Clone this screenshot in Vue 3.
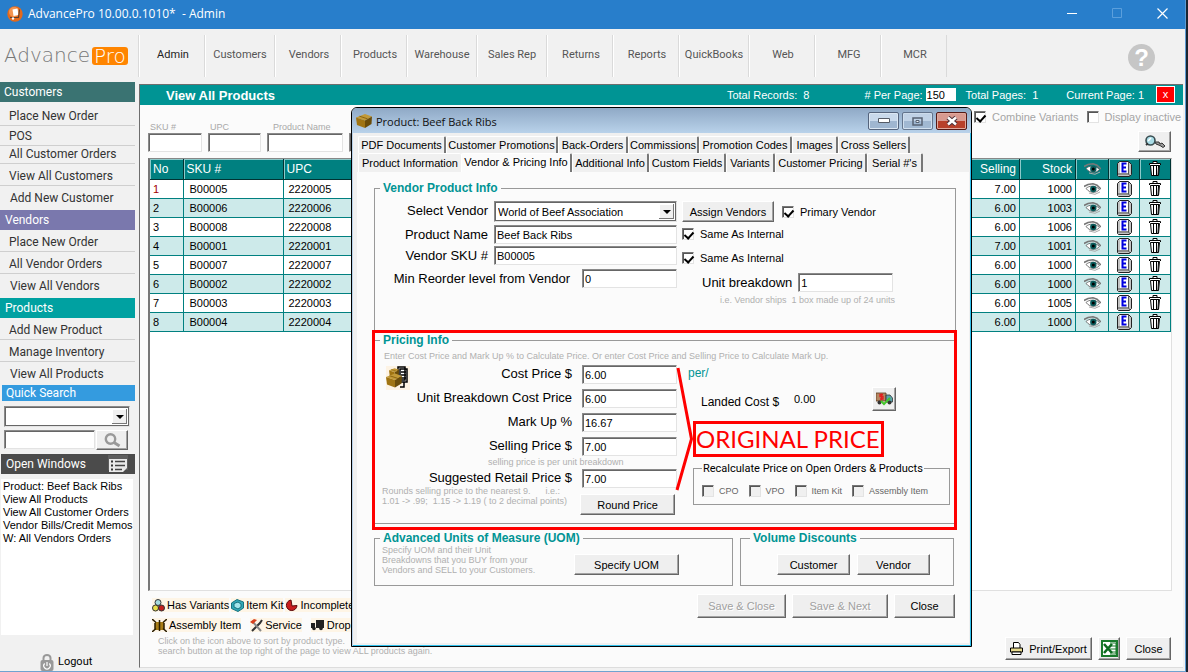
<script setup>
import { ref } from 'vue'

const navItems = ['Admin', 'Customers', 'Vendors', 'Products', 'Warehouse', 'Sales Rep', 'Returns', 'Reports', 'QuickBooks', 'Web', 'MFG', 'MCR']

const menus = [
  { title: 'Customers', kind: 'customers', items: ['Place New Order', 'POS', 'All Customer Orders', 'View All Customers', 'Add New Customer'] },
  { title: 'Vendors', kind: 'vendors', items: ['Place New Order', 'All Vendor Orders', 'View All Vendors'] },
  { title: 'Products', kind: 'products', items: ['Add New Product', 'Manage Inventory', 'View All Products'] },
]

const openWindows = ['Product: Beef Back Ribs', 'View All Products', 'View All Customer Orders', 'Vendor Bills/Credit Memos', 'W: All Vendors Orders']

const products = [
  { sku: 'B00005', upc: '2220005', selling: '7.00', stock: 1000 },
  { sku: 'B00006', upc: '2220006', selling: '6.00', stock: 1003 },
  { sku: 'B00008', upc: '2220008', selling: '6.00', stock: 1006 },
  { sku: 'B00001', upc: '2220001', selling: '7.00', stock: 1001 },
  { sku: 'B00007', upc: '2220007', selling: '6.00', stock: 1000 },
  { sku: 'B00002', upc: '2220002', selling: '6.00', stock: 1000 },
  { sku: 'B00003', upc: '2220003', selling: '6.00', stock: 1005 },
  { sku: 'B00004', upc: '2220004', selling: '6.00', stock: 1000 },
]

const tabsBack = ['PDF Documents', 'Customer Promotions', 'Back-Orders', 'Commissions', 'Promotion Codes', 'Images', 'Cross Sellers']
const tabsFront = ['Product Information', 'Vendor & Pricing Info', 'Additional Info', 'Custom Fields', 'Variants', 'Customer Pricing', "Serial #'s"]
const activeTab = ref('Vendor & Pricing Info')

const recalcTargets = ['CPO', 'VPO', 'Item Kit', 'Assembly Item']

const perPage = ref('150')
const productName = ref('Beef Back Ribs')
const vendorSku = ref('B00005')
const reorder = ref('0')
const breakdown = ref('1')
const cost = ref('6.00')
const unitCost = ref('6.00')
const markUp = ref('16.67')
const selling = ref('7.00')
const retail = ref('7.00')
</script>

<template>
  <div class="app">
    <svg class="sprite" aria-hidden="true">
      <symbol id="i-eye" viewBox="0 0 17 12">
        <path d="M0 3.500 4 1.500 9 .8 13 2.200 17 6" fill="none" stroke="#777" stroke-width="1.600" />
        <path d="M2 5.500C5 2.500 11 2 15.500 6.500 12 10.500 6 10.500 2 5.500Z" fill="#fff" stroke="#555" stroke-width=".8" />
        <circle cx="9.300" cy="6" r="3.200" fill="#0a5c5c" />
        <circle cx="9.300" cy="6" r="1.500" fill="#000" />
        <path d="M5 10 11 11.300 16 9" fill="none" stroke="#aaa" stroke-width="1" />
      </symbol>
      <symbol id="i-e" viewBox="0 0 15 16">
        <path d="M2.500.5h9l3 3v10l-2 2H1.500l-1-1v-12Z" fill="#c4c4c4" stroke="#222" />
        <path d="M11.500 1v12l1.500 2M1 13h10.500" fill="none" stroke="#555" />
        <rect x="3" y="1" width="8" height="11" fill="#fff" />
        <path d="M9.500 2.500H5.500v8h4M5.500 6.500h3.500" fill="none" stroke="#0000e0" stroke-width="2" />
      </symbol>
      <symbol id="i-trash" viewBox="0 0 12 15">
        <path d="M1.500 4.500h9l-1 10h-7Z" fill="#fff" stroke="#000" />
        <path d="M.5 4v-1.500h11V4M4 2V.5h4V2" fill="#fff" stroke="#000" />
        <path d="M4.500 5v9M7.500 5v9M9.500 5l-.5 9" stroke="#000" fill="none" />
      </symbol>
      <symbol id="i-box" viewBox="0 0 16 14">
        <path d="M0 3.500 9 0l7 2.500-7 4Z" fill="#c29a38" />
        <path d="m0 3.500 9 3V14L1 11Z" fill="#a07412" />
        <path d="m9 6.500 7-4-.5 7.500L9 14Z" fill="#6b4c08" />
        <path d="m3.500 2.200 8 2.600" stroke="#8c6512" />
      </symbol>
    </svg>

    <header class="titlebar">
      <svg class="app-icon" viewBox="0 0 16 16" aria-hidden="true">
        <circle cx="8" cy="8" r="7.700" fill="#e4691b" />
        <circle cx="7" cy="6" r="5" fill="#f39450" />
        <path d="m5.500 3.500 5-1 1 6.500-5 1Z" fill="#fff" />
        <path d="M3 11.500h8.500l1-8" fill="none" stroke="#5a4030" stroke-width="1.200" />
        <circle cx="6" cy="12.500" r="1.200" fill="#fff" />
      </svg>
      <h1>AdvancePro 10.00.0.1010*&nbsp; - Admin</h1>
      <div class="caption-buttons">
        <button type="button" aria-label="Minimize"><svg viewBox="0 0 11 11"><path d="M0 5.500h10" stroke="#fff" /></svg></button>
        <button type="button" aria-label="Maximize" disabled><svg viewBox="0 0 11 11"><path d="M.5.5h9v9h-9Z" fill="none" stroke="#5b9fdc" /></svg></button>
        <button type="button" aria-label="Close window"><svg viewBox="0 0 11 11"><path d="m.5.5 10 10m0-10-10 10" stroke="#fff" stroke-width="1.200" /></svg></button>
      </div>
    </header>

    <div class="topbar">
      <div class="logo">Advance<span>Pro</span></div>
      <nav class="nav">
        <a v-for="n in navItems" :key="n" href="#" :class="{ here: n === 'Admin', wide: ['Customers', 'Warehouse', 'Sales Rep', 'QuickBooks'].includes(n) }">{{ n }}</a>
      </nav>
      <button type="button" class="help" aria-label="Help">?</button>
    </div>

    <div class="body">
      <aside class="sidebar">
        <section v-for="m in menus" :key="m.title" class="menu" :class="m.kind">
          <h2>{{ m.title }}</h2>
          <a v-for="i in m.items" :key="i" href="#">{{ i }}</a>
        </section>

        <form class="quick" @submit.prevent>
          <h2>Quick Search</h2>
          <div class="select quick-select"><select aria-label="Search category"><option></option></select></div>
          <div class="quick-line">
            <input class="box" type="text" aria-label="Search text" />
            <button class="btn" type="submit" aria-label="Search">
              <svg width="17" height="15" viewBox="0 0 17 15"><circle cx="6.500" cy="6" r="4.700" fill="none" stroke="#999" stroke-width="2.400" /><path d="m10 9.500 5.500 3.500" stroke="#999" stroke-width="3" /></svg>
            </button>
          </div>
        </form>

        <section class="windows">
          <h2>Open Windows
            <svg width="20" height="18" viewBox="0 0 20 18" aria-hidden="true"><path d="M0 0h20v15H0Z" fill="#5e5e5e" /><path d="M1 4h18v9l-4 4H1Z" fill="#e9e9e9" /><path d="M3 6.500h2m-2 4h2m-2 4h2" stroke="#333" stroke-width="2" /><path d="M7 6.500h10m-10 4h10m-10 4h7" stroke="#444" stroke-width="1.500" /></svg>
          </h2>
          <ul><li v-for="w in openWindows" :key="w">{{ w }}</li></ul>
        </section>

        <button type="button" class="logout">
          <svg width="14" height="17" viewBox="0 0 14 17" aria-hidden="true"><path d="M3.500 8V4a3.500 3 0 0 1 7 0v4" fill="none" stroke="#999" stroke-width="2" /><rect x=".5" y="6" width="13" height="11" rx="2" fill="#999" /><path d="M4.700 9.500a3.200 3.200 0 1 0 4.600 0M7 8v4" fill="none" stroke="#fff" stroke-width="1.200" /></svg>
          Logout
        </button>
      </aside>

      <main class="main">
        <div class="bar">
          <h2>View All Products</h2>
          <span class="records">Total Records:&nbsp; 8</span>
          <label class="per">#&nbsp;Per Page: <input v-model="perPage" type="text" /></label>
          <span class="pages">Total Pages:&nbsp; 1</span>
          <span class="page-no">Current Page: 1</span>
          <button type="button" class="close-x" aria-label="Close list">x</button>
        </div>

        <div class="filters">
          <label class="f-sku">SKU #<input class="box" type="text" /></label>
          <label class="f-upc">UPC<input class="box" type="text" /></label>
          <label class="f-name">Product Name<input class="box" type="text" /></label>
          <label class="f-more"><input class="box" type="text" aria-label="Filter" /></label>
          <div class="options">
            <div class="ticks">
              <label><input type="checkbox" checked /> Combine Variants</label>
              <label><input type="checkbox" /> Display inactive</label>
            </div>
            <button type="button" class="btn find" aria-label="Find">
              <svg width="22" height="14" viewBox="0 0 22 14"><path d="M11 7h4l1 2 2-1 3 3-2 1.500-3-2-4-1.500Z" fill="#999" stroke="#333" /><circle cx="6.500" cy="5.500" r="4.500" fill="#a9dce6" stroke="#3a4c50" stroke-width="1.600" /><path d="m4 6 3-3" stroke="#fff" stroke-width="1.500" /><path d="m2 10 2-1.500" stroke="#333" stroke-width="2" /></svg>
            </button>
          </div>
        </div>

        <div class="grid-box">
          <table>
            <colgroup><col class="c-no" /><col class="c-sku" /><col class="c-upc" /><col /><col class="c-sell" /><col class="c-stock" /><col class="c-eye" /><col class="c-e" /><col class="c-bin" /></colgroup>
            <thead>
              <tr>
                <th>No</th><th>SKU #</th><th>UPC</th><th></th><th class="num">Selling</th><th class="num">Stock</th>
                <th class="ic"><svg width="17" height="12"><use href="#i-eye" /></svg></th>
                <th class="ic"><svg width="15" height="16"><use href="#i-e" /></svg></th>
                <th class="ic"><svg width="12" height="15"><use href="#i-trash" /></svg></th>
              </tr>
            </thead>
            <tbody>
              <tr v-for="(p, i) in products" :key="p.sku">
                <td :class="{ first: i === 0 }">{{ i + 1 }}</td><td class="code">{{ p.sku }}</td><td>{{ p.upc }}</td><td></td>
                <td class="num">{{ p.selling }}</td><td class="num">{{ p.stock }}</td>
                <td class="ic"><svg width="17" height="12"><use href="#i-eye" /></svg></td>
                <td class="ic"><svg width="15" height="16"><use href="#i-e" /></svg></td>
                <td class="ic"><svg width="12" height="15"><use href="#i-trash" /></svg></td>
              </tr>
            </tbody>
          </table>
        </div>

        <footer class="foot">
          <div class="legend">
            <div class="legend-row">
              <span><svg width="13" height="13" viewBox="0 0 13 13"><circle cx="6" cy="3.500" r="3" fill="#a6dce0" stroke="#333" /><circle cx="3.500" cy="9" r="3" fill="#e8e04a" stroke="#333" /><circle cx="9.500" cy="9" r="3" fill="#c22020" stroke="#333" /></svg>Has Variants</span>
              <span><svg width="13" height="13" viewBox="0 0 13 13"><path d="M.5 4 6 .5 12.500 3v6L7 12.500.5 9.500Z" fill="#32a9b8" stroke="#17717e" /><path d="M3 4.500 7 3l3 2v3L7 10 3 8Z" fill="#a4e5ec" stroke="#17717e" /></svg>Item Kit</span>
              <span><svg width="13" height="13" viewBox="0 0 13 13"><path d="M6 1a5.300 5.300 0 1 0 6 5.500L7 7Z" fill="#c81d1d" stroke="#5c0909" /></svg>Incomplete</span>
            </div>
            <div class="legend-row second">
              <span><svg width="15" height="13" viewBox="0 0 15 13"><path d="M3 3h9v8H3Z" fill="#a77c16" /><path d="M0 0l4 3.500M15 0l-4 3.500M0 13l4-3.500M15 13l-4-3.500M7.500 1v11M3 4v6M12 4v6" stroke="#2a1d00" stroke-width="1.500" /></svg>Assembly Item</span>
              <span><svg width="13" height="13" viewBox="0 0 13 13"><path d="m2 12 8-8 2-3" stroke="#333" stroke-width="2" fill="none" /><path d="m2 2 9 10" stroke="#888" stroke-width="2" /><path d="M0 3 4 0l3 1-4 4Z" fill="#d8401c" /></svg>Service</span>
              <span><svg width="14" height="12" viewBox="0 0 14 12"><path d="M5 1h8v8H5ZM0 4h4v5H0Z" fill="#222" /><circle cx="3" cy="9.500" r="1.800" fill="#222" /><circle cx="10" cy="9.500" r="1.800" fill="#222" /></svg>Drop Ship</span>
            </div>
            <p>Click on the icon above to sort by product type.<br />search button at the top right of the page to view ALL products again.</p>
          </div>
          <div class="foot-actions">
            <button type="button" class="btn print"><svg width="13" height="13" viewBox="0 0 13 13" aria-hidden="true"><path d="M3.500 6V.5h5l1.500 2V6" fill="#fff" stroke="#000" /><path d="M.5 6h12v4H.5Z" fill="#e6d98c" stroke="#000" /><path d="M2 10h9v2.500H2Z" fill="#fff" stroke="#000" /></svg>Print/Export</button>
            <button type="button" class="btn excel" aria-label="Export to Excel"><svg width="17" height="17" viewBox="0 0 17 17"><path d="M1 1h15v15H1Z" fill="#fff" stroke="#1a7a2c" stroke-width="2" /><path d="M9 3h6v11H9M9 6h6M9 9h6M9 12h6" stroke="#1a7a2c" fill="none" /><path d="m3 4 8 9m0-9-8 9" stroke="#0d6b20" stroke-width="2.600" /></svg></button>
            <button type="button" class="btn">Close</button>
          </div>
        </footer>
      </main>
    </div>

    <div class="dialog" role="dialog" aria-label="Product: Beef Back Ribs">
      <div class="dlg-title">
        <svg width="16" height="14" aria-hidden="true"><use href="#i-box" /></svg>
        <h2>Product: Beef Back Ribs</h2>
        <button type="button" aria-label="Minimize product"><svg width="12" height="6" viewBox="0 0 12 6"><path d="M.5.5h11v4H.5Z" fill="#fff" stroke="#555b66" /></svg></button>
        <button type="button" class="dim" aria-label="Maximize product"><svg width="11" height="9" viewBox="0 0 11 9"><path d="M1 1h9v7H1Z" fill="none" stroke="#444b59" stroke-width="1.500" /><path d="M4 3.500h3v2H4Z" fill="#fff" stroke="#444b59" /></svg></button>
        <button type="button" class="red" aria-label="Close product"><svg width="12" height="10" viewBox="0 0 12 10"><path d="m2 1.500 8 7m0-7-8 7" stroke="#4b3038" stroke-width="4.500" /><path d="m2 1.500 8 7m0-7-8 7" stroke="#fff" stroke-width="2.500" /></svg></button>
      </div>

      <div class="tabs" role="tablist">
        <div class="tab-row back">
          <button v-for="t in tabsBack" :key="t" type="button" role="tab" :aria-selected="t === activeTab">{{ t }}</button>
        </div>
        <div class="tab-row front">
          <button v-for="t in tabsFront" :key="t" type="button" role="tab" :class="{ active: t === activeTab }" :aria-selected="t === activeTab" @click="activeTab = t">{{ t }}</button>
        </div>
      </div>

      <div class="panel">
        <fieldset class="group vendor-info">
          <legend>Vendor Product Info</legend>
          <div class="cols">
            <div class="v-left">
              <div class="line l1"><label for="vendor">Select Vendor</label><div class="select"><select id="vendor"><option>World of Beef Association</option></select></div></div>
              <div class="line l2"><label for="pname">Product Name</label><input id="pname" v-model="productName" class="box" type="text" /></div>
              <div class="line l3"><label for="vsku">Vendor SKU #</label><input id="vsku" v-model="vendorSku" class="box" type="text" /></div>
              <div class="line l4"><label for="reorder">Min Reorder level from Vendor</label><input id="reorder" v-model="reorder" class="box" type="text" /></div>
            </div>
            <div class="v-right">
              <div class="line"><button type="button" class="btn assign">Assign Vendors</button><label class="tick"><input type="checkbox" checked />Primary Vendor</label></div>
              <label class="tick same"><input type="checkbox" checked />Same As Internal</label>
              <label class="tick same"><input type="checkbox" checked />Same As Internal</label>
              <div class="line unit"><label for="breakdown">Unit breakdown</label><input id="breakdown" v-model="breakdown" class="box" type="text" /></div>
              <p class="hint">i.e. Vendor ships&nbsp; 1 box made up of 24 units</p>
            </div>
          </div>
        </fieldset>

        <div class="marked">
          <fieldset class="group pricing">
            <legend>Pricing Info</legend>
            <p class="hint lead">Enter Cost Price and Mark Up % to Calculate Price. Or enter Cost Price and Selling Price to Calculate Mark Up.</p>
            <div class="cols">
              <div class="prices">
                <svg class="stock-icon" width="24" height="24" viewBox="0 0 24 24" aria-hidden="true"><rect width="24" height="24" fill="#fdf3e4" /><path d="M12 1h7v13h-7ZM14 3h7v13h-7Z" fill="#fff" stroke="#000" stroke-width="1.500" /><path d="M15 6h5m-5 3h5m-5 3h5M18 16v5h-4" stroke="#000" stroke-width="1.500" fill="none" /><svg x="3" y="2" width="10" height="9"><use href="#i-box" /></svg><svg x="0" y="7" width="16" height="15"><use href="#i-box" /></svg></svg>
                <label class="p1" for="cost">Cost Price $</label><input id="cost" v-model="cost" class="box p1" type="text" />
                <label class="p2" for="ucost">Unit Breakdown Cost Price</label><input id="ucost" v-model="unitCost" class="box p2" type="text" />
                <label class="p3" for="mark">Mark Up %</label><input id="mark" v-model="markUp" class="box p3" type="text" />
                <label class="p4" for="sell">Selling Price $</label><input id="sell" v-model="selling" class="box p4" type="text" />
                <p class="hint p5">selling price is per unit breakdown</p>
                <div class="retail"><label for="retail">Suggested Retail Price $</label><p class="hint">Rounds selling price to the nearest 9.&nbsp; &nbsp; &nbsp; i.e.:<br />1.01 -&gt; .99;&nbsp; 1.15 -&gt; 1.19 ( to 2 decimal points)</p></div>
                <input id="retail" v-model="retail" class="box p6" type="text" />
                <button type="button" class="btn round">Round Price</button>
              </div>
              <div class="p-right">
                <span class="per-unit">per/</span>
                <div class="landed"><span class="lc">Landed Cost $</span><output>0.00</output>
                  <button type="button" class="btn" aria-label="Landed cost details"><svg width="17" height="14" viewBox="0 0 17 14"><path d="M0 1h10v8H0Z" fill="#b48762" stroke="#5a3a20" stroke-width=".8" /><path d="M10 3h4l2.500 3v4H10Z" fill="#5aa3ad" stroke="#333" stroke-width=".8" /><path d="M7 2.500H4v2h3v2.500H4M5.500 1.500v7" stroke="#e02020" fill="none" stroke-width="1.300" /><circle cx="3.500" cy="10.500" r="2" fill="#333" /><circle cx="13.500" cy="10.500" r="2" fill="#333" /><path d="m5 9 3 3 6-6" fill="none" stroke="#45c52c" stroke-width="2" /></svg></button>
                </div>
                <strong class="callout">ORIGINAL PRICE</strong>
                <fieldset class="recalc">
                  <legend>Recalculate Price on Open Orders &amp; Products</legend>
                  <div><label v-for="r in recalcTargets" :key="r"><input type="checkbox" disabled />{{ r }}</label></div>
                </fieldset>
              </div>
            </div>
          </fieldset>
          <svg class="bracket" width="20" height="128" viewBox="0 0 20 128" aria-hidden="true"><path d="M3 3 16.500 74 2 125" fill="none" stroke="#f00" stroke-width="3" /></svg>
        </div>

        <div class="bottom">
          <fieldset class="group uom">
            <legend>Advanced Units of Measure (UOM)</legend>
            <div class="cols">
              <p class="hint">Specify UOM and their Unit<br />Breakdowns that you BUY from your<br />Vendors and SELL to your Customers.</p>
              <button type="button" class="btn">Specify UOM</button>
            </div>
          </fieldset>
          <fieldset class="group volume">
            <legend>Volume Discounts</legend>
            <div class="cols"><button type="button" class="btn">Customer</button><button type="button" class="btn">Vendor</button></div>
          </fieldset>
        </div>

        <div class="dlg-actions">
          <button type="button" class="btn" disabled>Save &amp; Close</button>
          <button type="button" class="btn next" disabled>Save &amp; Next</button>
          <button type="button" class="btn close">Close</button>
        </div>
      </div>
    </div>
  </div>
</template>

<style>
body { background: #1a2531; }
</style>

<style scoped>
* { box-sizing: border-box; }
.app {
  position: relative;
  display: flex;
  flex-direction: column;
  min-height: 100vh;
  margin-right: 2px;
  border-right: 1px solid #5c9bd3;
  border-bottom: 1px solid #6fa3d0;
  background: #f1f1f1;
  color: #000;
  font: 11px/14px "Liberation Sans", Arial, sans-serif;
  overflow: hidden;
}
.sprite { position: absolute; width: 0; height: 0; }
h1, h2, p, ul { margin: 0; padding: 0; font-size: inherit; font-weight: normal; }
a { color: inherit; text-decoration: none; }
button, input, select { font: inherit; color: inherit; margin: 0; }
button { cursor: pointer; }

/* window caption */
.titlebar { display: flex; align-items: center; height: 29px; padding: 0 12px 2px 7px; background: #287ecb; color: #fff; }
.app-icon { width: 16px; height: 16px; margin-right: 5px; }
.titlebar h1 { flex: 1; font: 12px/16px "Open Sans", "Noto Sans", sans-serif; }
.caption-buttons { display: flex; gap: 23px; }
.caption-buttons button { width: 22px; height: 22px; padding: 0; border: 0; background: none; }
.caption-buttons svg { display: block; width: 11px; height: 11px; margin: auto; }

/* top navigation */
.topbar { display: flex; align-items: center; height: 53px; }
.logo { display: flex; align-items: center; width: 138px; padding-left: 4px; font: 200 20px/19px "DejaVu Sans", sans-serif; color: #777; white-space: nowrap; }
.logo span { height: 18px; margin-left: 2px; padding: 0 2px; border-radius: 3px; background: #ff8500; color: #fff; line-height: 18px; }
.nav { display: flex; }
.nav a { width: 66px; height: 42px; padding-left: 3px; border-left: 1px solid #dadada; box-shadow: inset 1px 0 #fff; color: #555; font: 11px/40px Roboto, sans-serif; text-align: center; }
.nav a.wide { width: 70px; padding-left: 1px; }
.nav a.here { color: #222; }
.nav::after { content: ""; border-left: 1px solid #dadada; }
.help { width: 27px; height: 27px; margin: 3px 30px 0 auto; padding: 0; border: 0; border-radius: 50%; background: #c6c6c6; color: #fff; font: bold 24px/27px "Liberation Sans", sans-serif; }

.body { display: flex; flex: 1; }

/* sidebar */
.sidebar { display: flex; flex-direction: column; width: 139px; padding-right: 4px; }
.menu h2 { height: 20px; padding-left: 4px; color: #fff; font: 12px/20px Roboto, sans-serif; }
.customers h2 { background: #3a7372; }
.vendors h2 { background: #7a78ad; padding-left: 5px; }
.products h2 { background: #00a1a1; padding-left: 5px; }
.menu a { display: block; height: 22px; padding-left: 9px; border-bottom: 1px solid #cfcfcf; color: #333; font: 12px/24px Roboto, sans-serif; }
.menu a:last-child { height: 24px; padding-left: 10px; border: 0; }
.products a:last-child { height: 23px; }
.customers a:nth-of-type(1) { height: 24px; line-height: 28px; }
.customers a:nth-of-type(2) { height: 20px; line-height: 20px; }
.customers a:nth-of-type(3) { height: 18px; line-height: 16px; }
.quick { padding-left: 2px; }
.quick h2 { height: 16px; padding-left: 4px; background: #349bdf; color: #fff; font: 12px/16px Roboto, sans-serif; }
.quick-select { width: 126px; margin: 5px 0 3px 2px; }
.quick-line { display: flex; gap: 1px; margin-left: 2px; }
.quick-line .box { width: 91px; }
.quick-line .btn { width: 32px; height: 20px; }
.windows { display: flex; flex: 1; flex-direction: column; margin: 4px 0 0 1px; }
.windows h2 { display: flex; align-items: center; justify-content: space-between; height: 20px; padding: 0 7px 0 5px; background: #4b4b4b; color: #fff; font: 12px/20px Roboto, sans-serif; }
.windows ul { flex: 1; margin: 5px 2px 0 0; padding: 1px 0 0 2px; background: #fff; list-style: none; line-height: 13px; white-space: nowrap; }
.logout { display: flex; align-items: center; gap: 4px; height: 18px; margin: 18px 0 0 40px; padding: 0; border: 0; background: none; font: 11px/18px Roboto, sans-serif; }

/* classic controls */
.box { display: block; height: 19px; padding: 0 2px; border: 1px solid; border-color: #8a8a8a #e3e3e3 #e3e3e3 #8a8a8a; border-radius: 0; background: #fff; box-shadow: inset 1px 1px #666; outline: 0; }
.select { position: relative; height: 21px; padding: 2px; border: 1px solid; border-color: #8a8a8a #e3e3e3 #e3e3e3 #8a8a8a; background: #fff; box-shadow: inset 1px 1px #666, inset -1px -1px #666; }
.select select { display: block; width: 100%; height: 15px; padding: 0 18px 0 1px; border: 0; background: none; appearance: none; outline: 0; }
.select::after { content: ""; position: absolute; top: 2px; right: 2px; width: 15px; height: 15px; background: #f0f0f0; box-shadow: inset -1px -1px #777, inset 1px 1px #fff; pointer-events: none; }
.select::before { content: ""; position: absolute; z-index: 1; top: 8px; right: 5px; border: 4px solid transparent; border-top-color: #000; border-bottom: 0; pointer-events: none; }
.btn { display: flex; align-items: center; justify-content: center; height: 21px; padding: 0; border: 1px solid; border-color: #fff #666 #666 #fff; border-radius: 0; background: #efefef; box-shadow: inset -1px -1px #a3a3a3; white-space: nowrap; }
.btn:disabled { color: #a0a0a0; text-shadow: 1px 1px #fff; }
input[type="checkbox"] { position: relative; flex: none; width: 12px; height: 12px; border: 1px solid; border-color: #777 #e3e3e3 #e3e3e3 #777; background: #fff; box-shadow: inset 1px 1px #555; appearance: none; }
input[type="checkbox"]:checked::after { content: ""; position: absolute; top: 1px; left: 3px; width: 4px; height: 7px; border: solid #000; border-width: 0 2px 2px 0; transform: rotate(42deg); }
input[type="checkbox"]:disabled { background: #f0f0f0; }

/* product list */
.main { display: flex; flex: 1; flex-direction: column; min-width: 0; margin: 2px 2px 3px 0; border: 1px solid #6e6e6e; border-width: 1px 0 0 1px; border-bottom: 1px solid #ddd; background: #fbfbfb; }
.bar { display: flex; align-items: center; height: 20px; padding: 0 8px 1px 26px; background: #009494; color: #fff; white-space: nowrap; }
.bar h2 { font: bold 13px/20px "Liberation Sans", Arial, sans-serif; margin-right: auto; padding-top: 2px; }
.bar .records { margin-right: 55px; }
.per { display: flex; align-items: center; gap: 3px; }
.per input { width: 30px; height: 13px; padding: 0 1px; border: 0; background: #fff; color: #000; }
.pages { margin-left: 10px; }
.page-no { margin: 0 12px 0 28px; }
.close-x { width: 19px; height: 17px; padding: 0 0 2px; border: 1px solid #fff; background: #f00; line-height: 12px; }
.filters { display: flex; gap: 4px; height: 53px; padding-left: 8px; }
.filters > label { padding: 16px 0 0 2px; color: #a9a9a9; font-size: 9px; line-height: 12px; white-space: nowrap; }
.filters .box { width: 100%; margin-left: -2px; font-size: 11px; }
.f-sku { width: 56px; }
.f-upc { width: 55px; }
.f-name { width: 78px; text-indent: 4px; }
.filters > .f-more { width: 78px; padding-top: 28px; }
.options { display: flex; flex-direction: column; align-items: flex-end; margin-left: auto; }
.ticks { display: flex; gap: 8px; margin: 5px 2px 0 0; color: #a5a5a5; white-space: nowrap; }
.ticks label { display: flex; align-items: center; gap: 6px; }
.find { width: 33px; height: 21px; margin: 7px 12px 0 0; }
.grid-box { flex: 1; margin: 0 11px 0 8px; border: 2px solid; border-color: #888 #e0e0e0 #e0e0e0 #777; border-width: 1px 1px 1px 2px; background: #fff; }
table { width: 100%; border-collapse: collapse; table-layout: fixed; }
th, td { padding: 0 3px; border: 1px solid #008080; border-width: 0 1px 1px 0; text-align: left; font-weight: normal; line-height: 14px; }
th { height: 20px; border-color: #033; background: #008080; box-shadow: inset 1px 1px #8cc9c9; color: #fff; font-size: 12px; }
td { height: 19px; }
td:nth-child(3) { padding-left: 5px; }
td.code { padding-left: 6px; }
td.first { color: #a00000; }
tbody tr:nth-child(even) { background: #cdeaea; }
.num { text-align: right; }
.ic { padding: 0; text-align: center; }
.ic svg { display: block; margin: auto; }
.c-no { width: 33px; }
.c-sku { width: 100px; }
.c-upc { width: 110px; }
.c-sell { width: 56px; }
.c-stock { width: 56px; }
.c-eye { width: 33px; }
.c-e { width: 31px; }
.c-bin { width: 31px; }
.foot { display: flex; justify-content: space-between; align-items: flex-end; height: 76px; padding: 0 12px 7px 12px; }
.legend { align-self: flex-start; padding-top: 7px; white-space: nowrap; }
.legend-row { display: flex; gap: 2px; height: 20px; }
.legend-row span { display: flex; align-items: center; gap: 2px; height: 14px; background: #fef5e6; }
.legend-row.second { gap: 9px; height: 17px; }
.legend p { margin: 1px 0 0 6px; color: #b0b0b0; font-size: 9px; line-height: 10px; }
.foot-actions { display: flex; gap: 6px; }
.foot-actions .btn { width: 45px; height: 23px; }
.foot-actions .print { width: 87px; gap: 6px; }
.foot-actions .excel { width: 22px; }

/* product window */
.dialog { position: absolute; top: 107px; left: 351px; width: 621px; padding-bottom: 3px; border: 1px solid #000; border-radius: 6px 6px 0 0; background: #f0f0f0; box-shadow: inset 1px 0 #b9d2ea, inset -1px -1px #2fc0ec; }
.dlg-title { display: flex; height: 25px; padding: 4px 4px 0 4px; gap: 3px; border-radius: 5px 5px 0 0; background: linear-gradient(#8fa9c6, #b9d2ea); }
.dlg-title > svg { margin: 2px 1px 0 0; }
.dlg-title h2 { flex: 1; color: #111; font: 11px/19px "Open Sans", "Noto Sans", sans-serif; }
.dlg-title button { display: flex; align-items: center; justify-content: center; width: 31px; height: 18px; padding: 0; border: 1px solid #55647c; border-radius: 2px; background: linear-gradient(#c9d9eb 50%, #9fb6d0 50%); box-shadow: inset 0 0 0 1px #dbe7f3; }
.dlg-title .dim { opacity: .8; }
.dlg-title .red { border-color: #551a16; background: linear-gradient(#d89a90 50%, #b8402a 50%); box-shadow: inset 0 0 0 1px #e0a89c; }
.tabs { padding: 3px 0 0 6px; }
.tab-row { display: grid; }
.back { grid-template-columns: 88px 112px 70px 71px 93px 46px 72px; }
.front { grid-template-columns: 103px 111px 77px 77px 49px 92px 56px; }
.tab-row button { height: 17px; padding: 0; border: 0; border-right: 2px solid #777; border-top: 1px solid #fff; border-left: 1px solid #fff; border-radius: 2px 2px 0 0; background: #f0f0f0; line-height: 17px; white-space: nowrap; }
.front button { height: 19px; }
.front button:first-child { border-right: 0; }
.front .active { padding-bottom: 3px; background: #fbfbfb; }
.panel { margin: 0 2px 0 5px; padding: 9px 13px 25px 17px; background: #fbfbfb; }

.group { min-width: 0; margin: 0; padding: 0; border: 1px solid #999; }
.group > legend { height: 14px; margin-left: 5px; padding: 0 3px; color: #009494; font-weight: bold; font-size: 12px; line-height: 14px; }
.cols, .line { display: flex; }
.hint { color: #b0b0b0; font-size: 9px; line-height: 10px; white-space: nowrap; }
.panel label { white-space: nowrap; }

.vendor-info { height: 149px; border-bottom: 0; }
.vendor-info .cols { padding-top: 6px; }
.v-left { width: 302px; }
.v-left .line { justify-content: flex-end; font-size: 13px; }
.v-left label { line-height: 20px; }
.v-left .select, .v-left .box { width: 183px; margin-left: 6px; font-size: 11px; }
.l1, .l4 { height: 24px; }
.l2 { height: 21px; }
.l3 { height: 23px; }
.v-left .l4 .box { width: 95px; margin-left: 12px; }
.v-right { padding-left: 5px; }
.assign { width: 92px; margin-right: 8px; }
.tick { display: flex; align-items: center; gap: 6px; }
.same { height: 24px; }
.unit { align-items: center; gap: 6px; margin: 3px 0 0 20px; font-size: 13px; }
.unit .box { width: 95px; font-size: 11px; }
.v-right .hint { margin: 3px 0 0 38px; }

.marked { position: relative; margin: 0 -1px 1px -2px; border: 3px solid #f00; height: 200px; }
.pricing { height: 191px; border-width: 1px 0; }
.lead { margin: 4px 0 4px 9px; }
.prices { display: grid; grid-template-columns: 11px 24px 162px 95px; grid-template-rows: 24px 24px 24px 20px 12px 25px 21px; width: 302px; font-size: 13px; }
.prices > label { grid-column: 3; text-align: right; line-height: 17px; }
.prices .box { grid-column: 4; width: 95px; margin-left: 10px; font-size: 11px; }
.prices .p1 { grid-row: 1; }
.prices .p2 { grid-row: 2; }
.prices .p3 { grid-row: 3; }
.prices .p4 { grid-row: 4; }
.prices .p5 { grid-row: 5; grid-column: 3 / 5; padding-left: 78px; }
.prices .p6 { grid-row: 6; }
.stock-icon { grid-column: 2; grid-row: 1 / 3; margin-top: 1px; }
.retail { grid-column: 1 / 4; grid-row: 6 / 8; padding-left: 7px; }
.retail label { display: block; text-align: right; line-height: 17px; }
.round { grid-column: 4; grid-row: 7; width: 95px; margin-left: 8px; font-size: 11px; }
.p-right { width: 273px; padding-left: 16px; }
.per-unit { display: block; height: 22px; margin-left: -5px; color: #009494; font-size: 12px; line-height: 17px; }
.landed { display: flex; align-items: center; margin-left: 8px; font-size: 12px; }
.lc { width: 93px; padding-top: 6px; }
.landed output { width: 78px; font-size: 11px; }
.landed .btn { width: 24px; height: 24px; }
.callout { display: block; width: 191px; height: 36px; margin-top: 10px; border: 3px solid #f00; color: #f00; font: 24px/30px Lato, sans-serif; white-space: nowrap; }
.recalc { height: 43px; margin: 5px 0 0; padding: 0 0 0 8px; border: 1px solid #999; }
.recalc legend { padding: 0 1px; font: 11px/13px Roboto, sans-serif; white-space: nowrap; }
.recalc div { display: flex; gap: 10px; padding-top: 9px; color: #666; font-size: 9px; }
.recalc label { display: flex; align-items: center; gap: 5px; }
.bracket { position: absolute; top: 32px; left: 300px; }

.bottom { display: grid; grid-template-columns: 359px 214px; gap: 7px; }
.bottom .group { height: 55px; }
.uom .hint { width: 199px; padding-left: 7px; }
.uom .btn { width: 105px; margin-top: 9px; }
.volume legend { margin-left: 9px; }
.volume .cols { gap: 7px; padding: 9px 0 0 36px; }
.volume .btn { width: 73px; }
.dlg-actions { display: flex; justify-content: flex-end; gap: 6px; margin: 8px 1px 0 0; }
.dlg-actions .btn { width: 89px; height: 24px; }
.dlg-actions .next { width: 96px; }
.dlg-actions .close { width: 61px; }
</style>
